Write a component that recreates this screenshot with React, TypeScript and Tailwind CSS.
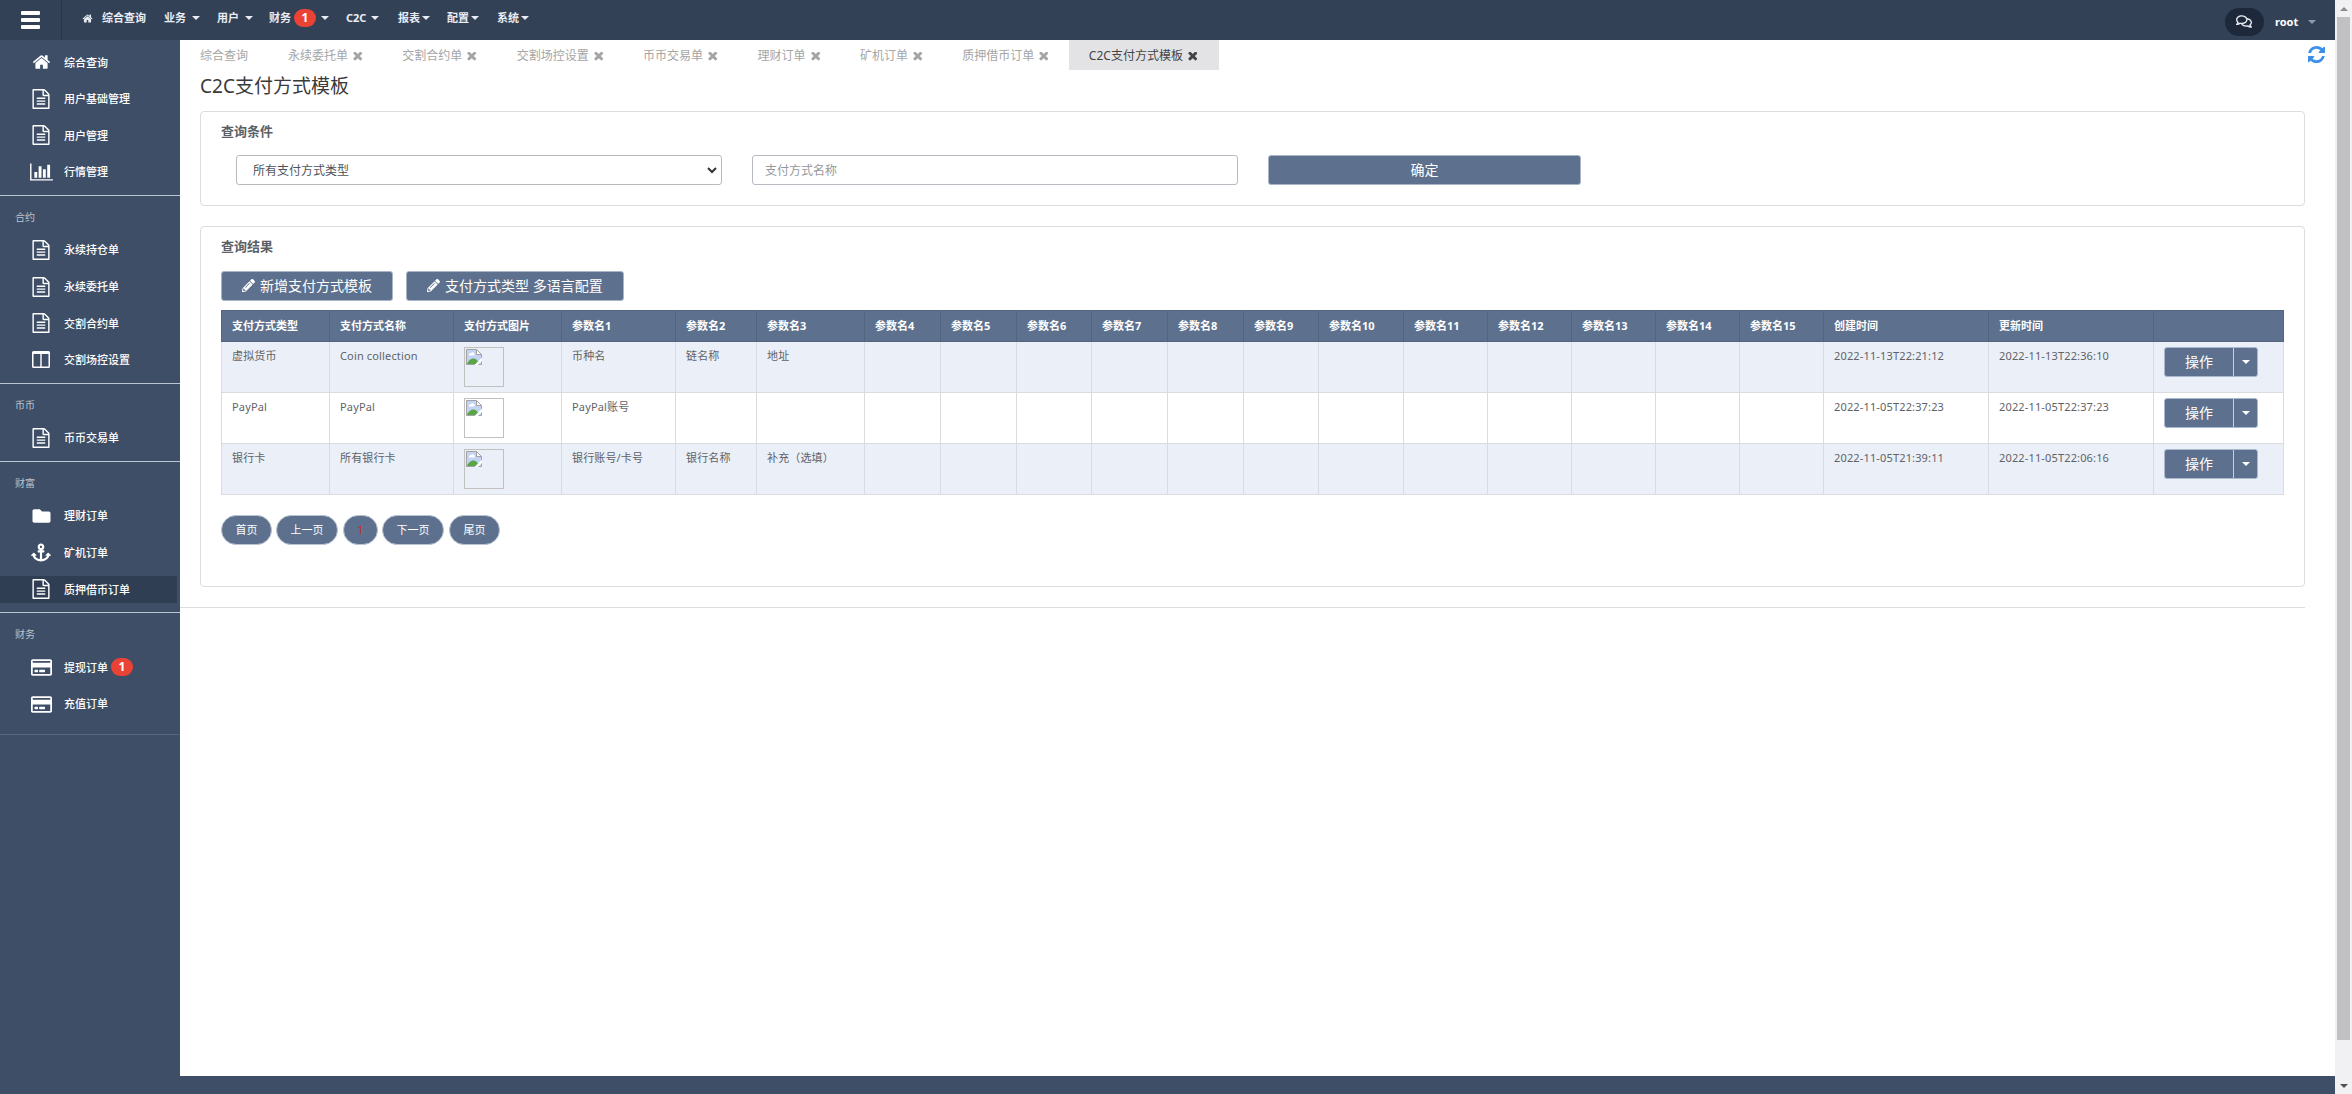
import { FaAnchor, FaFolder, FaPencilAlt, FaRegComments, FaRegCreditCard } from "react-icons/fa";

interface IconProps {
  className?: string;
}

interface MenuItem {
  label: string;
  icon: (props: IconProps) => React.ReactNode;
  active?: boolean;
  badge?: number;
}

interface MenuGroup {
  title?: string;
  items: MenuItem[];
}

const HomeIcon = ({ className }: IconProps) => (
  <svg viewBox="0 0 1792 1792" fill="currentColor" className={className}>
    <path d="M1472 992v480q0 26-19 45t-45 19h-384v-384h-256v384h-384q-26 0-45-19t-19-45v-480q0-1 .5-3t.5-3l575-474 575 474q1 2 1 6zm223-69l-62 74q-8 9-21 11h-3q-13 0-21-7l-692-577-692 577q-12 8-24 7-13-2-21-11l-62-74q-8-10-7-23.5t11-21.5l719-599q32-26 76-26t76 26l244 204v-195q0-14 9-23t23-9h192q14 0 23 9t9 23v408l219 182q10 8 11 21.5t-7 23.5z" />
  </svg>
);

const FileIcon = ({ className }: IconProps) => (
  <svg viewBox="0 0 1792 1792" fill="currentColor" className={className}>
    <path d="M1596 380q28 28 48 76t20 88v1152q0 40-28 68t-68 28h-1344q-40 0-68-28t-28-68v-1600q0-40 28-68t68-28h896q40 0 88 20t76 48zm-444-244v376h376q-10-29-22-41l-313-313q-12-12-41-22zm384 1528v-1024h-416q-40 0-68-28t-28-68v-416h-768v1536h1280zm-1024-864q0-14 9-23t23-9h704q14 0 23 9t9 23v64q0 14-9 23t-23 9h-704q-14 0-23-9t-9-23v-64zm736 224q14 0 23 9t9 23v64q0 14-9 23t-23 9h-704q-14 0-23-9t-9-23v-64q0-14 9-23t23-9h704zm0 256q14 0 23 9t9 23v64q0 14-9 23t-23 9h-704q-14 0-23-9t-9-23v-64q0-14 9-23t23-9h704z" />
  </svg>
);

const ChartIcon = () => (
  <svg viewBox="0 0 2048 1792" fill="currentColor" className="h-[20px] w-[23px]">
    <path d="M640 896v512h-256v-512h256zm384-512v1024h-256v-1024h256zm1024 1152v128h-2048v-1536h128v1408h1920zm-640-896v768h-256v-768h256zm384-384v1152h-256v-1152h256z" />
  </svg>
);

const ColumnsIcon = () => (
  <svg viewBox="0 0 18 17" fill="currentColor" className="h-[17px] w-[18px]">
    <path fillRule="evenodd" d="M1.5 0h15A1.5 1.5 0 0 1 18 1.5v14a1.5 1.5 0 0 1-1.5 1.5h-15A1.5 1.5 0 0 1 0 15.5v-14A1.5 1.5 0 0 1 1.5 0zM1.5 3v12.5h6.8V3zM9.7 3v12.5h6.8V3z" />
  </svg>
);

const TimesIcon = ({ className }: IconProps) => (
  <svg viewBox="300 420 1192 1192" fill="currentColor" className={className}>
    <path d="M1490 1322q0 40-28 68l-136 136q-28 28-68 28t-68-28l-294-294-294 294q-28 28-68 28t-68-28l-136-136q-28-28-28-68t28-68l294-294-294-294q-28-28-28-68t28-68l136-136q28-28 68-28t68 28l294 294 294-294q28-28 68-28t68 28l136 136q28 28 28 68t-28 68l-294 294 294 294q28 28 28 68z" />
  </svg>
);

const RefreshIcon = ({ className }: IconProps) => (
  <svg viewBox="128 128 1536 1536" fill="currentColor" className={className}>
    <path d="M1639 1056q0 5-1 7-64 268-268 434.5t-478 166.5q-146 0-282.5-55t-243.5-157l-129 129q-19 19-45 19t-45-19-19-45v-448q0-26 19-45t45-19h448q26 0 45 19t19 45-19 45l-137 137q71 66 161 102t187 36q134 0 250-65t186-179q11-17 53-117 8-23 30-23h192q13 0 22.5 9.5t9.5 22.5zm25-800v448q0 26-19 45t-45 19h-448q-26 0-45-19t-19-45 19-45l138-138q-148-137-349-137-134 0-250 65t-186 179q-11 17-53 117-8 23-30 23h-199q-13 0-22.5-9.5t-9.5-22.5v-7q65-268 270-434.5t480-166.5q146 0 284 55.5t245 156.5l130-129q19-19 45-19t45 19 19 45z" />
  </svg>
);

const BrokenImage = () => (
  <div className="h-10 w-10 border border-[#c0c0c0] p-px">
    <svg viewBox="0 0 16 16" className="h-4 w-4">
      <path d="M.5.5h10l5 5v10H.5z" fill="#c3d3f3" stroke="#a3a3a3" />
      <path d="M10.5.5v5h5z" fill="#fff" stroke="#a3a3a3" />
      <path d="M3 6.5a2 2 0 0 1 2-2.5 2.2 2.2 0 0 1 3.5 2.5z" fill="#fff" />
      <path d="M1 15c1-3 4-6 7-5.5 2 .3 4 2 5 5.5z" fill="#5aa545" />
      <path d="M8.5 16L16 8.5V12l-4 4z" fill="#fff" />
    </svg>
  </div>
);

const Caret = ({ className = "" }: IconProps) => (
  <span className={`inline-block border-x-4 border-t-4 border-x-transparent ${className}`} />
);

const AnchorIcon = () => <FaAnchor className="h-[19px] w-[20px]" />;
const FolderIcon = () => <FaFolder className="h-[18px] w-[19px]" />;
const CardIcon = () => <FaRegCreditCard className="h-[19px] w-[21px]" />;
const DocIcon = () => <FileIcon className="h-[20px] w-[20px]" />;
const HouseIcon = () => <HomeIcon className="h-[20px] w-[19px]" />;

const menuGroups: MenuGroup[] = [
  {
    items: [
      { label: "综合查询", icon: HouseIcon },
      { label: "用户基础管理", icon: DocIcon },
      { label: "用户管理", icon: DocIcon },
      { label: "行情管理", icon: ChartIcon },
    ],
  },
  {
    title: "合约",
    items: [
      { label: "永续持仓单", icon: DocIcon },
      { label: "永续委托单", icon: DocIcon },
      { label: "交割合约单", icon: DocIcon },
      { label: "交割场控设置", icon: ColumnsIcon },
    ],
  },
  { title: "币币", items: [{ label: "币币交易单", icon: DocIcon }] },
  {
    title: "财富",
    items: [
      { label: "理财订单", icon: FolderIcon },
      { label: "矿机订单", icon: AnchorIcon },
      { label: "质押借币订单", icon: DocIcon, active: true },
    ],
  },
  {
    title: "财务",
    items: [
      { label: "提现订单", icon: CardIcon, badge: 1 },
      { label: "充值订单", icon: CardIcon },
    ],
  },
];

const navItems = [
  { label: "业务", width: "w-[53px]", gap: "ml-[6px]" },
  { label: "用户", width: "w-[52px]", gap: "ml-[6px]" },
  { label: "财务", width: "w-[77px]", gap: "ml-[5px]", badge: 1 },
  { label: "C2C", width: "w-[52px]", gap: "ml-[5px]" },
  { label: "报表", width: "w-[49px]", gap: "ml-[2px]" },
  { label: "配置", width: "w-[50px]", gap: "ml-[2px]" },
  { label: "系统", width: "w-[50px]", gap: "ml-[2px]" },
];

const tabs = [
  "永续委托单",
  "交割合约单",
  "交割场控设置",
  "币币交易单",
  "理财订单",
  "矿机订单",
  "质押借币订单",
];

const columnWidths = [
  108, 124, 108, 114, 81, 108, 76, 76, 75, 76, 76, 75, 85, 84, 84, 84, 84, 84, 165, 165, 130,
];

const paramNumbers = Array.from({ length: 15 }, (_, i) => i + 1);

const rows = [
  {
    type: "虚拟货币",
    name: "Coin collection",
    params: ["币种名", "链名称", "地址"],
    created: "2022-11-13T22:21:12",
    updated: "2022-11-13T22:36:10",
  },
  {
    type: "PayPal",
    name: "PayPal",
    params: ["PayPal账号"],
    created: "2022-11-05T22:37:23",
    updated: "2022-11-05T22:37:23",
  },
  {
    type: "银行卡",
    name: "所有银行卡",
    params: ["银行账号/卡号", "银行名称", "补充（选填）"],
    created: "2022-11-05T21:39:11",
    updated: "2022-11-05T22:06:16",
  },
];

const pages = [
  { label: "首页", className: "w-[51px]" },
  { label: "上一页", className: "ml-[4px] w-[62px]" },
  { label: "1", className: "ml-[5px] w-[35px] text-[#d9232e]" },
  { label: "下一页", className: "ml-[4px] w-[62px]" },
  { label: "尾页", className: "ml-[5px] w-[51px]" },
];

const TopBar = () => (
  <header className="flex h-10 shrink-0 bg-[#334157] text-[11px] font-bold text-[#e9edf3]">
    <div className="flex w-[62px] flex-col gap-[3px] border-r border-[#27364b] pt-[11px] pl-[21px]">
      <span className="h-[4px] w-[19px] rounded-[1px] bg-white" />
      <span className="h-[4px] w-[19px] rounded-[1px] bg-white" />
      <span className="h-[4px] w-[19px] rounded-[1px] bg-white" />
    </div>
    <nav className="flex h-[36px] items-center pl-[20px]">
      <HomeIcon className="h-[11px] w-[11px]" />
      <span className="ml-[9px] w-[62px]">综合查询</span>
      {navItems.map((item) => (
        <div key={item.label} className={`flex items-center whitespace-nowrap ${item.width}`}>
          {item.label}
          {item.badge && (
            <span className="ml-[3px] flex h-[18px] w-[22px] items-center justify-center rounded-full bg-[#ea4335] text-[12px] text-white">
              {item.badge}
            </span>
          )}
          <Caret className={`border-t-[#e9edf3] ${item.gap}`} />
        </div>
      ))}
    </nav>
    <div className="mt-2 ml-auto flex h-7 items-center pr-[19px]">
      <span className="mr-[11px] flex h-7 w-[39px] items-center justify-center rounded-full bg-[#1d293b] pr-px pb-[2px]">
        <FaRegComments className="h-[15px] w-[16px]" />
      </span>
      <span className="w-[33px] text-white">root</span>
      <Caret className="border-t-[#8f9bab]" />
    </div>
  </header>
);

const Sidebar = () => (
  <aside className="w-[180px] shrink-0 bg-[#3d4e66] pt-[4px] text-[11px] text-white">
    {menuGroups.map((group, index) => (
      <div
        key={index}
        className={`border-b ${index === menuGroups.length - 1 ? "border-[#56657b] pb-[12px]" : "border-[#bcc5d2] pb-[4.5px]"}`}
      >
        {group.title && (
          <div className="flex h-[36px] items-center pt-[7px] pl-[15px] text-[10px] text-[#bcc4cf]">{group.title}</div>
        )}
        {group.items.map((item) => (
          <div key={item.label} className="flex h-[36.6px] items-center">
            <div className={`flex h-[27px] w-[177px] items-center ${item.active ? "bg-[#2f3e53]" : ""}`}>
              <span className="ml-[29px] flex w-[24px] justify-center">
                <item.icon />
              </span>
              <span className="ml-[11px] pt-px font-medium">{item.label}</span>
              {item.badge && (
                <span className="ml-[3px] flex h-[18px] w-[22px] items-center justify-center rounded-full bg-[#ea4335] text-[12px] font-bold">
                  {item.badge}
                </span>
              )}
            </div>
          </div>
        ))}
      </div>
    ))}
  </aside>
);

const TabBar = () => (
  <div className="flex h-[30px] text-[12px] text-[#a5a5a5]">
    <div className="flex w-[88px] items-center pt-[2px] pl-[20px]">综合查询</div>
    {tabs.map((tab) => (
      <div key={tab} className="flex items-center pt-[2px] pr-[20px] pl-[19.9px]">
        {tab}
        <TimesIcon className="ml-[5px] h-[9px] w-[9.5px]" />
      </div>
    ))}
    <div className="flex w-[150px] items-center bg-[#e3e3e5] pt-[2px] pl-[20px] text-[#444]">
      C2C支付方式模板
      <TimesIcon className="ml-[5px] h-[9px] w-[9.5px]" />
    </div>
    <RefreshIcon className="mt-[6px] mr-[10px] ml-auto h-[17px] w-[17px] text-[#3e8fe8]" />
  </div>
);

const SearchPanel = () => (
  <section className="h-[95px] rounded border border-[#dcdde0] pt-[9px]">
    <h3 className="pl-[20px] text-[13px] leading-[20px] font-bold text-[#5b6066]">查询条件</h3>
    <div className="mt-[14px] flex pl-[35px] text-[12px]">
      <div className="flex h-[30px] w-[486px] items-center justify-between rounded-[3px] border border-[#b9babd] pt-px pr-[4px] pl-[16px] text-[#4f5358]">
        所有支付方式类型
        <svg viewBox="0 0 10 7" className="h-[7px] w-[10px]" fill="none" stroke="#333" strokeWidth="2">
          <path d="M1 1l4 4 4-4" />
        </svg>
      </div>
      <div className="ml-[30px] flex h-[30px] w-[486px] items-center rounded-[3px] border border-[#b9bac2] pt-px pl-[12px] text-[#96989c]">
        支付方式名称
      </div>
      <button className="ml-[30px] h-[30px] w-[313px] rounded-[3px] border border-[#a9b5c6] bg-[#5d708d] pb-[2px] text-[14px] text-white">
        确定
      </button>
    </div>
  </section>
);

const ActionButton = () => (
  <div className="flex h-[30px] w-[94px] rounded-[3px] border border-[#a9b8cf] bg-[#5d708d] text-white">
    <span className="flex w-[69px] items-center justify-center border-r border-[#c9d2df] pb-px text-[14px] tracking-normal">
      操作
    </span>
    <span className="flex flex-1 items-center justify-center">
      <Caret className="border-t-white" />
    </span>
  </div>
);

const ResultTable = () => (
  <table className="w-[2062px] table-fixed border-collapse text-left text-[11px] leading-[18px] text-[#5f6368]">
    <colgroup>
      {columnWidths.map((width, index) => (
        <col key={index} style={{ width }} />
      ))}
    </colgroup>
    <thead>
      <tr className="h-[31px] bg-[#5d718e] font-bold text-white [&>th]:border [&>th]:border-[#526682] [&>th]:px-[10px]">
        <th>支付方式类型</th>
        <th>支付方式名称</th>
        <th>支付方式图片</th>
        {paramNumbers.map((n) => (
          <th key={n}>参数名{n}</th>
        ))}
        <th>创建时间</th>
        <th>更新时间</th>
        <th></th>
      </tr>
    </thead>
    <tbody>
      {rows.map((row) => (
        <tr
          key={row.type}
          className="h-[51px] align-top tracking-[0.15px] whitespace-nowrap odd:bg-[#ebeff7] [&>td]:border [&>td]:border-[#d9dbde] [&>td]:px-[10px] [&>td]:pt-[5px] [&>td]:pb-[4px]"
        >
          <td>{row.type}</td>
          <td>{row.name}</td>
          <td>
            <BrokenImage />
          </td>
          {paramNumbers.map((n) => (
            <td key={n}>{row.params[n - 1]}</td>
          ))}
          <td>{row.created}</td>
          <td>{row.updated}</td>
          <td>
            <ActionButton />
          </td>
        </tr>
      ))}
    </tbody>
  </table>
);

const ResultPanel = () => (
  <section className="mt-[20px] h-[361px] rounded border border-[#dcdde0] pt-[9px] pl-[20px]">
    <h3 className="text-[13px] leading-[20px] font-bold text-[#5b6066]">查询结果</h3>
    <div className="mt-[15px] flex gap-[13px] text-[14px] text-white">
      <button className="flex h-[30px] w-[172px] items-center rounded-[3px] border border-[#a9b5c6] bg-[#5d708d] pb-[2px] pl-[20px]">
        <FaPencilAlt className="mr-[5px] h-[13px] w-[13px]" />
        新增支付方式模板
      </button>
      <button className="flex h-[30px] w-[218px] items-center rounded-[3px] border border-[#a9b5c6] bg-[#5d708d] pb-[2px] pl-[20px]">
        <FaPencilAlt className="mr-[5px] h-[13px] w-[13px]" />
        支付方式类型 多语言配置
      </button>
    </div>
    <div className="mt-[9px]">
      <ResultTable />
    </div>
    <div className="mt-[20px] flex text-[11px] text-white">
      {pages.map((page) => (
        <span
          key={page.label}
          className={`flex h-[30px] items-center justify-center rounded-full border border-[#b9c3d1] bg-[#5d708d] ${page.className}`}
        >
          {page.label}
        </span>
      ))}
    </div>
  </section>
);

const Scrollbar = () => (
  <div className="flex w-[17px] shrink-0 flex-col items-center bg-[#f1f0f2]">
    <div className="flex h-[17px] items-center">
      <span className="border-x-4 border-b-4 border-x-transparent border-b-[#8b8b8b]" />
    </div>
    <div className="h-[1023px] w-[13px] bg-[#c1c0c2]" />
    <div className="mt-auto flex h-[17px] items-center">
      <Caret className="border-t-[#505050]" />
    </div>
  </div>
);

const App = () => {
  return (
    <div className="flex h-[1094px] w-[2352px] overflow-hidden bg-white font-['Noto_Sans','Noto_Sans_CJK_SC',sans-serif]">
      <div className="flex min-w-0 flex-1 flex-col">
        <TopBar />
        <div className="flex min-h-0 flex-1">
          <Sidebar />
          <div className="flex min-w-0 flex-1 flex-col">
            <TabBar />
            <main className="flex-1">
              <div className="mr-[30px] border-b border-[#dcdde0] pb-[20px] pl-[20px]">
                <h1 className="h-[41px] pt-px text-[19px] leading-[30px] text-[#3a3a3a]">C2C支付方式模板</h1>
                <SearchPanel />
                <ResultPanel />
              </div>
            </main>
            <footer className="h-[18px] bg-[#3d4e66]" />
          </div>
        </div>
      </div>
      <Scrollbar />
    </div>
  );
};

export default App;
